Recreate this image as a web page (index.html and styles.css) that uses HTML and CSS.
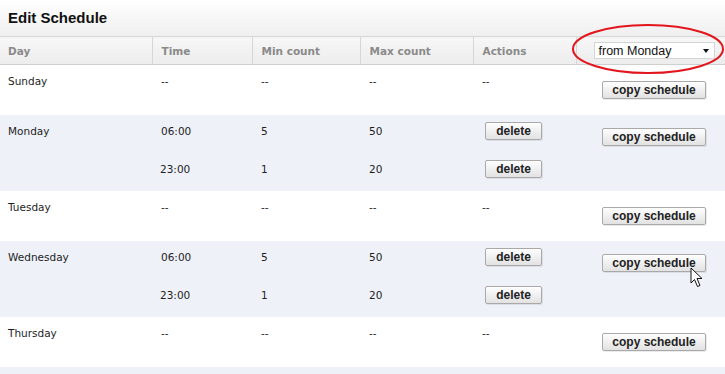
FILE: index.html
```html
<!DOCTYPE html>
<html lang="en">
  <head>
    <meta charset="UTF-8" />
    <meta name="viewport" content="width=device-width, initial-scale=1.0" />
    <title>Edit Schedule</title>
    <link rel="stylesheet" href="styles.css">
  </head>
  <body>
    <div class="panel">
      <h1>Edit Schedule</h1>
      <table class="schedule">
        <colgroup>
          <col style="width: 152px" />
          <col style="width: 100px" />
          <col style="width: 108px" />
          <col style="width: 113px" />
          <col style="width: 103px" />
          <col style="width: 149px" />
        </colgroup>
        <thead>
          <tr>
            <th>Day</th>
            <th>Time</th>
            <th>Min count</th>
            <th>Max count</th>
            <th>Actions</th>
            <th class="pick">
              <div class="select">from Monday<span class="caret"></span></div>
            </th>
          </tr>
        </thead>
        <tbody class="single">
          <tr>
            <td>Sunday</td><td>--</td><td>--</td><td>--</td><td>--</td>
            <td class="copy"><button class="btn copy-btn">copy schedule</button></td>
          </tr>
        </tbody>
        <tbody class="double">
          <tr>
            <td rowspan="2">Monday</td><td>06:00</td><td>5</td><td>50</td>
            <td><button class="btn del-btn">delete</button></td>
            <td rowspan="2" class="copy"><button class="btn copy-btn">copy schedule</button></td>
          </tr>
          <tr class="last">
            <td>23:00</td><td>1</td><td>20</td>
            <td><button class="btn del-btn">delete</button></td>
          </tr>
        </tbody>
        <tbody class="single">
          <tr>
            <td>Tuesday</td><td>--</td><td>--</td><td>--</td><td>--</td>
            <td class="copy"><button class="btn copy-btn">copy schedule</button></td>
          </tr>
        </tbody>
        <tbody class="double">
          <tr>
            <td rowspan="2">Wednesday</td><td>06:00</td><td>5</td><td>50</td>
            <td><button class="btn del-btn">delete</button></td>
            <td rowspan="2" class="copy"><button class="btn copy-btn">copy schedule</button></td>
          </tr>
          <tr class="last">
            <td>23:00</td><td>1</td><td>20</td>
            <td><button class="btn del-btn">delete</button></td>
          </tr>
        </tbody>
        <tbody class="single">
          <tr>
            <td>Thursday</td><td>--</td><td>--</td><td>--</td><td>--</td>
            <td class="copy"><button class="btn copy-btn">copy schedule</button></td>
          </tr>
        </tbody>
        <tbody class="single">
          <tr>
            <td></td><td></td><td></td><td></td><td></td><td></td>
          </tr>
        </tbody>
      </table>

      <!-- annotation drawn over the screenshot -->
      <svg class="ring" width="154" height="52" viewBox="0 0 154 52">
        <ellipse cx="77" cy="26" rx="75" ry="24" fill="none" stroke="#e3161d" stroke-width="2" />
      </svg>
      <svg class="pointer" width="14" height="22" viewBox="0 0 14 22">
        <path d="M1 1 L1 16 L4.5 12.5 L7.5 19.5 L10 18.5 L7 11.5 L12 11.5 Z" fill="#fff" stroke="#111" stroke-width="1" stroke-linejoin="round" />
      </svg>
    </div>
  </body>
</html>
```

FILE: styles.css
```css
body {
  margin: 0;
  font-family: "DejaVu Sans", Verdana, sans-serif;
  font-size: 10.5px;
  color: #1e1e1e;
  background-color: white;
  overflow: hidden;
}
.panel {
  position: relative;
  width: 725px;
}
h1 {
  margin: 0;
  height: 36px;
  padding: 9px 8px 0;
  box-sizing: border-box;
  font-family: "Liberation Sans", Arial, sans-serif;
  font-size: 15px;
  font-weight: bold;
  color: #111;
  background: linear-gradient(#ffffff, #efefef);
}
.schedule {
  width: 725px;
  table-layout: fixed;
  border-collapse: collapse;
}
.schedule th {
  height: 27px;
  padding: 0 0 0 9px;
  text-align: left;
  font-weight: bold;
  color: #8a8a8a;
  background: linear-gradient(#f7f7f7, #ececec);
  border-top: 1px solid #d8d8d8;
  border-bottom: 1px solid #cfcfcf;
  border-left: 1px solid #d6d6d6;
}
.schedule th:first-child {
  padding-left: 8px;
  border-left: none;
}
.schedule th.pick {
  padding-left: 17px;
}
.select {
  position: relative;
  width: 121px;
  height: 17px;
  box-sizing: border-box;
  padding: 1px 0 0 4px;
  background-color: white;
  border: 1px solid #d4d4d4;
  font-family: "Liberation Sans", Arial, sans-serif;
  font-size: 12.5px;
  font-weight: normal;
  line-height: 14px;
  color: #111;
}
.caret {
  position: absolute;
  right: 5px;
  top: 6px;
  border-left: 3.5px solid transparent;
  border-right: 3.5px solid transparent;
  border-top: 4px solid #111;
}
.schedule td {
  padding: 7px 0 13px 9px;
  line-height: 18px;
  vertical-align: top;
}
.schedule td:first-child {
  padding-left: 8px;
}
.schedule tbody:nth-of-type(even) {
  background-color: #eef1f8;
}
.single td {
  padding-bottom: 25px;
}
.schedule td.copy {
  padding-left: 26px;
  padding-top: 16px;
  padding-bottom: 16px;
}
.double td.copy {
  padding-top: 13px;
}
.btn {
  display: block;
  height: 18px;
  padding: 0;
  font-family: "Liberation Sans", Arial, sans-serif;
  font-size: 12px;
  font-weight: bold;
  color: #222;
  background: linear-gradient(#fefefe, #e2e2e2);
  border: 1px solid #a9a9a9;
  border-radius: 2px;
  box-shadow: 1px 1px 0 rgba(0, 0, 0, 0.08);
}
.copy-btn {
  width: 104px;
}
.del-btn {
  width: 57px;
  margin-left: 3px;
}
.ring {
  position: absolute;
  left: 571px;
  top: 23px;
}
.pointer {
  position: absolute;
  left: 690px;
  top: 267px;
}
```
